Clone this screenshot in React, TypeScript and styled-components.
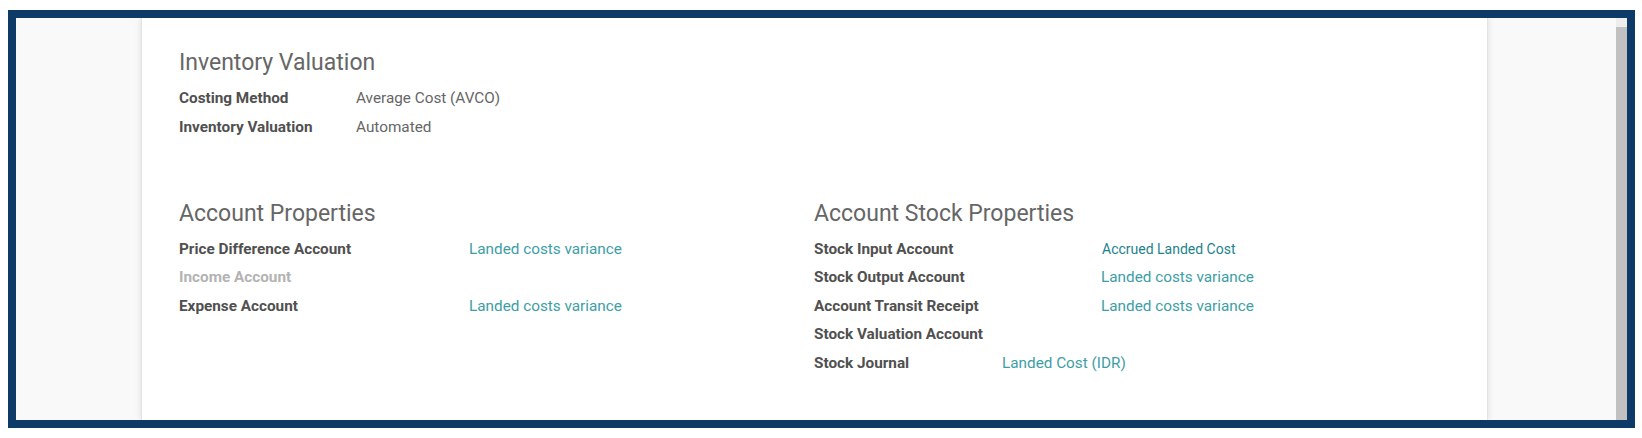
import styled, { createGlobalStyle } from "styled-components";

const GlobalStyle = createGlobalStyle`
  body {
    margin: 0;
    background: #ffffff;
    font-family: Roboto, "Noto Sans", sans-serif;
  }
`;

interface FieldRow {
  label: string,
  value?: string,
  link?: boolean,
  dark?: boolean,
  muted?: boolean,
  labelWidth: number
}

const Frame = styled.div`
  margin: 10px 0 0 8px;
  width: 1627px;
  height: 418px;
  box-sizing: border-box;
  border: 8px solid #0d3a66;
  display: flex;
  overflow: hidden;
`;

const Viewport = styled.div`
  flex: 1;
  background: #f9f9f9;
  display: flex;
  padding-left: 125px;
  overflow: hidden;
`;

const Scrollbar = styled.div`
  width: 11px;
  background: #ededed;
  display: flex;
  flex-direction: column;
`;

const Thumb = styled.div`
  margin-top: 9px;
  flex: 1;
  background: #c1c1c1;
`;

const Sheet = styled.div`
  width: 1347px;
  flex-shrink: 0;
  box-sizing: border-box;
  background: #ffffff;
  padding: 32px 37px 0;
  box-shadow: 0 0 6px rgba(0, 0, 0, 0.12);
  border-left: 1px solid #e4e4e4;
  border-right: 1px solid #e4e4e4;
`;

const Heading = styled.h3`
  margin: 0 0 8px;
  font-size: 23px;
  font-weight: 400;
  line-height: 26px;
  color: #666666;
`;

const Columns = styled.div`
  margin-top: 60px;
  display: grid;
  grid-template-columns: 635px 635px;
`;

const Row = styled.div`
  display: flex;
  align-items: center;
  height: 28.4px;
  font-size: 15.3px;
`;

const Label = styled.div<{ $width: number, $muted?: boolean }>`
  width: ${p => p.$width}px;
  flex-shrink: 0;
  font-weight: 700;
  color: ${p => p.$muted ? "#b3b3b3" : "#505050"};
`;

const Value = styled.div<{ $link?: boolean, $dark?: boolean }>`
  color: ${p => p.$dark ? "#23838a" : p.$link ? "#3d9ea5" : "#666666"};
  font-size: ${p => p.$dark ? "14px" : "inherit"};
`;

const valuationRows: FieldRow[] = [
  { label: "Costing Method", value: "Average Cost (AVCO)", labelWidth: 177 },
  { label: "Inventory Valuation", value: "Automated", labelWidth: 177 },
];

const accountRows: FieldRow[] = [
  { label: "Price Difference Account", value: "Landed costs variance", link: true, labelWidth: 290 },
  { label: "Income Account", muted: true, labelWidth: 290 },
  { label: "Expense Account", value: "Landed costs variance", link: true, labelWidth: 290 },
];

const stockRows: FieldRow[] = [
  { label: "Stock Input Account", value: "Accrued Landed Cost", link: true, dark: true, labelWidth: 288 },
  { label: "Stock Output Account", value: "Landed costs variance", link: true, labelWidth: 287 },
  { label: "Account Transit Receipt", value: "Landed costs variance", link: true, labelWidth: 287 },
  { label: "Stock Valuation Account", labelWidth: 287 },
  { label: "Stock Journal", value: "Landed Cost (IDR)", link: true, labelWidth: 188 },
];

const Fields = ({ rows }: { rows: FieldRow[] }) => <>
  {rows.map(r => <Row key={r.label}>
    <Label $width={r.labelWidth} $muted={r.muted}>{r.label}</Label>
    {r.value && <Value $link={r.link} $dark={r.dark}>{r.value}</Value>}
  </Row>)}
</>;

export default function App() {
  return <>
    <GlobalStyle />
    <Frame>
      <Viewport>
        <Sheet>
          <section>
            <Heading>Inventory Valuation</Heading>
            <Fields rows={valuationRows} />
          </section>
          <Columns>
            <section>
              <Heading>Account Properties</Heading>
              <Fields rows={accountRows} />
            </section>
            <section>
              <Heading>Account Stock Properties</Heading>
              <Fields rows={stockRows} />
            </section>
          </Columns>
        </Sheet>
      </Viewport>
      <Scrollbar>
        <Thumb />
      </Scrollbar>
    </Frame>
  </>;
}
